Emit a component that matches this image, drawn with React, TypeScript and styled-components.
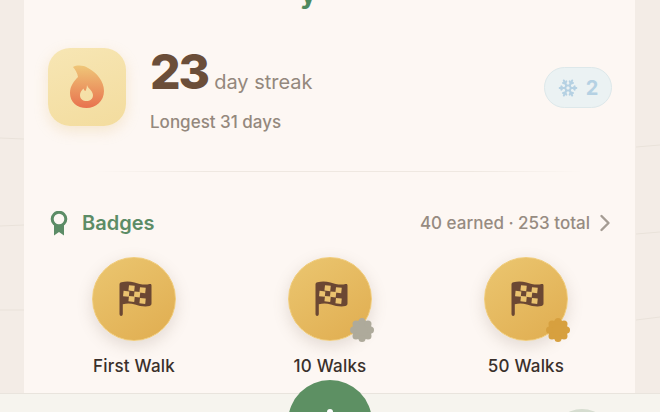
import styled, { createGlobalStyle } from 'styled-components';
import { ChevronRight, Snowflake } from 'lucide-react';

const GlobalStyle = createGlobalStyle`
    html, body {
        margin: 0;
        padding: 0;
        background: #f3ece6;
    }
    body {
        font-family: "Inter", "Liberation Sans", sans-serif;
    }
`;

const Page = styled.div`
    position: relative;
    width: 660px;
    height: 412px;
    overflow: hidden;
    background: #f3ece6;
`;

const MapLines = styled.svg`
    position: absolute;
    inset: 0;
`;

const Card = styled.main`
    position: relative;
    box-sizing: border-box;
    width: 611px;
    height: 393px;
    margin: 0 24px;
    padding: 48px 23px 0 24px;
    background: #fdf7f3;
    overflow: hidden;
`;

const ClippedTitle = styled.div`
    position: absolute;
    top: -22px;
    left: 276px;
    font-size: 28px;
    line-height: 30px;
    font-weight: 700;
    color: #4f8a5f;
`;

const StreakRow = styled.section`
    display: flex;
    align-items: center;
    height: 78px;
`;

const FlameTile = styled.div`
    width: 78px;
    height: 78px;
    flex: none;
    display: flex;
    align-items: center;
    justify-content: center;
    border-radius: 22px;
    background: linear-gradient(160deg, #f7e6b4, #f3dc9e);
    box-shadow: 0 5px 14px rgba(226, 190, 120, 0.28);
`;

const StreakText = styled.div`
    margin-left: 24px;
    flex: 1;
`;

const StreakTop = styled.div`
    display: flex;
    align-items: baseline;
    height: 54px;
    margin-top: 3px;
`;

const StreakCount = styled.span`
    font-size: 48px;
    line-height: 54px;
    font-weight: 800;
    letter-spacing: -2px;
    color: #6b4e39;
`;

const StreakUnit = styled.span`
    margin-left: 6px;
    font-size: 20px;
    font-weight: 400;
    color: #94887d;
`;

const StreakLongest = styled.div`
    margin-top: 13px;
    font-size: 17px;
    line-height: 20px;
    font-weight: 500;
    color: #94887d;
`;

const FreezePill = styled.div`
    box-sizing: border-box;
    width: 68px;
    height: 41px;
    display: flex;
    align-items: center;
    justify-content: center;
    gap: 8px;
    margin-top: 1px;
    border: 1.5px solid #dde8ea;
    border-radius: 21px;
    background: #ebf2f3;
    color: #b5d1e3;
    font-size: 20px;
    font-weight: 700;
`;

const Divider = styled.hr`
    height: 1px;
    margin: 45px 0 0;
    border: 0;
    background: linear-gradient(90deg, transparent 8%, #efe8e1 28%, #efe8e1 75%, transparent 95%);
`;

const SectionHead = styled.header`
    display: flex;
    align-items: center;
    height: 28px;
    margin-top: 37px;
`;

const RibbonIcon = styled.svg`
    margin-left: 2px;
    flex: none;
`;

const SectionTitle = styled.h2`
    flex: 1;
    margin: 0 0 0 14px;
    font-size: 20px;
    font-weight: 600;
    color: #5c8c66;
`;

const SectionMeta = styled.span`
    font-size: 17px;
    font-weight: 500;
    color: #968b81;
`;

const MetaChevron = styled(ChevronRight)`
    margin-left: 1px;
    margin-right: -7px;
    color: #a59c93;
`;

const BadgeGrid = styled.div`
    display: grid;
    grid-template-columns: repeat(3, 196px);
    margin: 20px 0 0 -12px;
`;

const BadgeItem = styled.div`
    display: flex;
    flex-direction: column;
    align-items: center;
`;

const Medal = styled.div`
    position: relative;
    box-sizing: border-box;
    width: 84px;
    height: 84px;
    display: flex;
    align-items: center;
    justify-content: center;
    border: 1.5px solid #f0cc7c;
    border-radius: 50%;
    background: linear-gradient(145deg, #ebc670, #e0ad50);
    box-shadow: 0 5px 16px rgba(120, 100, 80, 0.2);
`;

const FlagIcon = styled.svg`
    margin-left: 3px;
`;

const TierSeal = styled.svg`
    position: absolute;
    right: -3.5px;
    bottom: -2.5px;
`;

const BadgeName = styled.div`
    margin-top: 14px;
    font-size: 17px;
    line-height: 22px;
    font-weight: 500;
    letter-spacing: 0.2px;
    color: #3a302b;
`;

const TabBar = styled.nav`
    position: relative;
    box-sizing: border-box;
    height: 19px;
    border-top: 1px solid #e9e4dd;
    background: #f6f4ee;
`;

const WalkButton = styled.div`
    position: absolute;
    top: -14px;
    left: 288px;
    width: 84px;
    height: 84px;
    border-radius: 50%;
    background: #5d9063;
    display: flex;
    justify-content: center;
`;

const WalkDot = styled.span`
    width: 6px;
    height: 6px;
    margin-top: 29px;
    border-radius: 50%;
    background: #fff;
`;

const SideButton = styled.div`
    position: absolute;
    top: 15px;
    left: 552px;
    width: 60px;
    height: 60px;
    border-radius: 50%;
    background: #d6ddd0;
`;

const Flame = () => (
    <svg width="36" height="44" viewBox="0 0 36 44">
        <defs>
            <linearGradient id="flameFill" x1="0" y1="0" x2="0" y2="1">
                <stop offset="0" stopColor="#efc678" />
                <stop offset="1" stopColor="#e8724e" />
            </linearGradient>
        </defs>
        <path
            fillRule="evenodd"
            fill="url(#flameFill)"
            d="M4 2C8 0 14 0 19 3C28 8 35 16 35 26C35 36 27 43 17.5 43C8 43 1 37 1 28C1 21 5 16 9 12C8.5 8 6.5 5 4 2ZM18 20C18.5 23 23.5 25 24 30C24 34 21 36 17.5 36C14 36 11 34 11 30C11 27 13 25 14.5 23.5C15 25 15.5 26 16.5 26C17.5 24 18 22 18 20Z"
        />
    </svg>
);

const CHECKS = [
    [10, 4.2], [21, 6.2], [4.6, 9.8], [15.5, 10.4], [10, 15], [21, 17],
];

const CheckeredFlag = () => (
    <FlagIcon width="34" height="36" viewBox="0 0 34 36">
        <path
            fill="#6b4733"
            d="M0.5 3.5C0.5 2.2 1.2 1.6 2.5 1.2C7 0 11 0.2 15.5 1.5C20 3 26 4.5 30.5 3C32 2.6 32.5 3.2 32.5 4.5V22.5C32.5 23.8 32 24.5 30.5 25C26 26.2 20.5 25 16 23.5C12 22.2 8 22 3.8 23.2V33C3.8 35.5 0.5 35.5 0.5 33Z"
        />
        {CHECKS.map(([x, y]) => (
            <rect key={`${x}-${y}`} x={x} y={y} width="5.8" height="5.4" fill="#eac26f" transform={`rotate(6 ${x} ${y})`} />
        ))}
    </FlagIcon>
);

const Seal = ({ color }: { color: string }) => (
    <TierSeal width="26" height="26" viewBox="0 0 26 26">
        <circle cx="13" cy="13" r="10" fill={color} />
        {Array.from({ length: 8 }, (_, i) => (
            <circle
                key={i}
                cx={13 + 8.5 * Math.cos((i * Math.PI) / 4)}
                cy={13 + 8.5 * Math.sin((i * Math.PI) / 4)}
                r="3.5"
                fill={color}
            />
        ))}
    </TierSeal>
);

const BADGES = [
    { name: 'First Walk' },
    { name: '10 Walks', seal: '#aeaa9b' },
    { name: '50 Walks', seal: '#d7a03f' },
];

const App = () => {
    return (
        <Page>
            <GlobalStyle />
            <MapLines width="660" height="412" viewBox="0 0 660 412" fill="none" stroke="#e9e2da" strokeWidth="1">
                <path d="M0 138L24 139" />
                <path d="M0 226L24 225" />
                <path d="M0 310L24 310" />
                <path d="M636 147L660 145" />
                <path d="M636 234L660 232" />
                <path d="M636 320L660 317" />
            </MapLines>
            <Card>
                <ClippedTitle>y</ClippedTitle>
                <StreakRow>
                    <FlameTile>
                        <Flame />
                    </FlameTile>
                    <StreakText>
                        <StreakTop>
                            <StreakCount>23</StreakCount>
                            <StreakUnit>day streak</StreakUnit>
                        </StreakTop>
                        <StreakLongest>Longest 31 days</StreakLongest>
                    </StreakText>
                    <FreezePill>
                        <Snowflake size={20} strokeWidth={2.4} />
                        2
                    </FreezePill>
                </StreakRow>
                <Divider />
                <SectionHead>
                    <RibbonIcon width="18" height="25" viewBox="0 0 18 25">
                        <path fill="#5c8c66" d="M4 13H14V24.5L9 21L4 24.5Z" />
                        <circle cx="9" cy="8" r="6.8" fill="#fdf7f3" stroke="#5c8c66" strokeWidth="3" />
                    </RibbonIcon>
                    <SectionTitle>Badges</SectionTitle>
                    <SectionMeta>40 earned · 253 total</SectionMeta>
                    <MetaChevron size={28} strokeWidth={2.1} />
                </SectionHead>
                <BadgeGrid>
                    {BADGES.map(badge => (
                        <BadgeItem key={badge.name}>
                            <Medal>
                                <CheckeredFlag />
                                {badge.seal && <Seal color={badge.seal} />}
                            </Medal>
                            <BadgeName>{badge.name}</BadgeName>
                        </BadgeItem>
                    ))}
                </BadgeGrid>
            </Card>
            <TabBar>
                <WalkButton>
                    <WalkDot />
                </WalkButton>
                <SideButton />
            </TabBar>
        </Page>
    );
};

export default App;
